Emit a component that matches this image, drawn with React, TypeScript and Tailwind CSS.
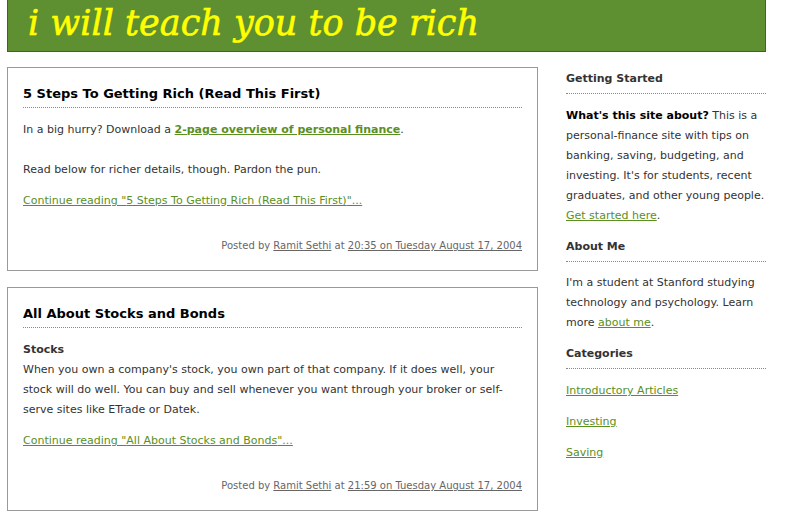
const sans = { fontFamily: '"DejaVu Sans", Verdana, sans-serif' };

function Post({
  title,
  children,
  more,
  time,
}: {
  title: string;
  children: React.ReactNode;
  more: string;
  time: string;
}) {
  return (
    <div className="border border-[#999] bg-white px-[15px] pt-[16px] pb-[16px]">
      <h2 className="text-[13px] leading-[20px] font-bold text-black pb-[3px] border-b border-dotted border-[#888]">
        {title}
      </h2>
      <div className="mt-[12px] text-[11px] leading-[20px] text-[#333]">{children}</div>
      <p className="mt-[11px] text-[11px] leading-[20px]">
        <a href="#" className="text-[#5b8f22] underline">
          Continue reading "{more}"...
        </a>
      </p>
      <p className="mt-[27px] text-[10px] leading-[16px] text-[#666] text-right">
        Posted by <a href="#" className="underline">Ramit Sethi</a> at{' '}
        <a href="#" className="underline">{time}</a>
      </p>
    </div>
  );
}

function SideHead({ children }: { children: React.ReactNode }) {
  return (
    <h3 className="text-[11px] leading-[16px] font-bold text-[#333] pb-[6px] border-b border-dotted border-[#888]">
      {children}
    </h3>
  );
}

export default function App() {
  return (
    <div className="min-h-screen bg-white" style={sans}>
      <header className="ml-[7px] w-[759px] h-[52px] bg-[#5e8f30] border-x border-b border-[#4a5a40] pl-[20px]">
        <h1
          className="text-[35px] leading-[46px] italic text-[#ffff00] [-webkit-text-stroke:0.6px_#ffff00]"
          style={{ fontFamily: '"DejaVu Serif", Georgia, serif' }}
        >
          i will teach you to be rich
        </h1>
      </header>

      <div className="flex mt-[15px] ml-[7px]">
        <main className="w-[531px] flex flex-col gap-[16px]">
          <Post
            title="5 Steps To Getting Rich (Read This First)"
            more="5 Steps To Getting Rich (Read This First)"
            time="20:35 on Tuesday August 17, 2004"
          >
            <p>
              In a big hurry? Download a{' '}
              <a href="#" className="font-bold text-[#5b8f22] underline">
                2-page overview of personal finance
              </a>
              .
            </p>
            <p className="mt-[20px]">Read below for richer details, though. Pardon the pun.</p>
          </Post>
          <Post
            title="All About Stocks and Bonds"
            more="All About Stocks and Bonds"
            time="21:59 on Tuesday August 17, 2004"
          >
            <p className="font-bold">Stocks</p>
            <p>
              When you own a company's stock, you own part of that company. If it does well, your
              stock will do well. You can buy and sell whenever you want through your broker or
              self-serve sites like ETrade or Datek.
            </p>
          </Post>
        </main>

        <aside className="ml-[28px] w-[200px] pt-[4px] text-[11px] leading-[20px] text-[#333]">
          <SideHead>Getting Started</SideHead>
          <p className="mt-[12px]">
            <b className="text-black">What's this site about?</b> This is a personal-finance site
            with tips on banking, saving, budgeting, and investing. It's for students, recent
            graduates, and other young people.{' '}
            <a href="#" className="text-[#5b8f22] underline">
              Get started here
            </a>
            .
          </p>

          <div className="mt-[13px]">
            <SideHead>About Me</SideHead>
          </div>
          <p className="mt-[11px]">
            I'm a student at Stanford studying technology and psychology. Learn more{' '}
            <a href="#" className="text-[#5b8f22] underline">
              about me
            </a>
            .
          </p>

          <div className="mt-[13px]">
            <SideHead>Categories</SideHead>
          </div>
          <ul className="mt-[12px] flex flex-col gap-[11px]">
            {['Introductory Articles', 'Investing', 'Saving'].map((c) => (
              <li key={c}>
                <a href="#" className="text-[#5b8f22] underline">
                  {c}
                </a>
              </li>
            ))}
          </ul>
        </aside>
      </div>
    </div>
  );
}
